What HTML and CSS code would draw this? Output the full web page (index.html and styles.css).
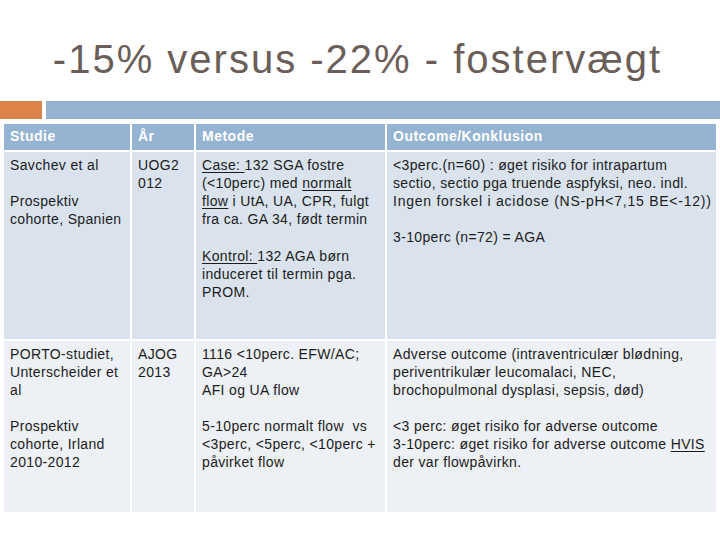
FILE: index.html
```html
<!DOCTYPE html>
<html lang="da">
<head>
<meta charset="utf-8">
<link rel="stylesheet" href="styles.css">
</head>
<body>
<div class="slide">
  <h1 class="title">-15% versus -22% - fostervægt</h1>
  <div class="bars">
    <div class="bar-orange"></div>
    <div class="bar-blue"></div>
  </div>
  <div class="table">
    <div class="cell head">Studie</div>
    <div class="cell head">År</div>
    <div class="cell head">Metode</div>
    <div class="cell head">Outcome/Konklusion</div>

    <div class="cell r1">
      <p>Savchev et al</p>
      <p>Prospektiv<br>cohorte, Spanien</p>
    </div>
    <div class="cell r1">
      <p>UOG2<br>012</p>
    </div>
    <div class="cell r1">
      <p><u>Case: </u>132 SGA fostre<br>(&lt;10perc) med <u>normalt</u><br><u>flow</u> i UtA, UA, CPR, fulgt<br>fra ca. GA 34, født termin</p>
      <p class="gap19"><u>Kontrol: </u>132 AGA børn<br>induceret til termin pga.<br>PROM.</p>
    </div>
    <div class="cell r1">
      <p>&lt;3perc.(n=60) : øget risiko for intrapartum<br>sectio, sectio pga truende aspfyksi, neo. indl.<br><span class="wide">Ingen forskel i acidose (NS-pH&lt;7,15 BE&lt;-12))</span></p>
      <p>3-10perc (n=72) = AGA</p>
    </div>

    <div class="cell r2">
      <p>PORTO-studiet,<br>Unterscheider et<br>al</p>
      <p>Prospektiv<br>cohorte, Irland<br>2010-2012</p>
    </div>
    <div class="cell r2">
      <p>AJOG<br>2013</p>
    </div>
    <div class="cell r2">
      <p>1116 &lt;10perc. EFW/AC;<br>GA&gt;24<br>AFI og UA flow</p>
      <p>5-10perc normalt flow&nbsp; vs<br>&lt;3perc, &lt;5perc, &lt;10perc +<br>påvirket flow</p>
    </div>
    <div class="cell r2">
      <p>Adverse outcome (intraventriculær blødning,<br>periventrikulær leucomalaci, NEC,<br>brochopulmonal dysplasi, sepsis, død)</p>
      <p>&lt;3 perc: øget risiko for adverse outcome<br>3-10perc: øget risiko for adverse outcome <u>HVIS</u><br>der var flowpåvirkn.</p>
    </div>
  </div>
</div>
</body>
</html>
```

FILE: styles.css
```css
html, body {
  margin: 0;
  padding: 0;
  background: #ffffff;
}

.slide {
  width: 720px;
  height: 540px;
  overflow: hidden;
  font-family: "Liberation Sans", Arial, sans-serif;
}

.title {
  margin: 0;
  height: 101px;
  box-sizing: border-box;
  padding-top: 36px;
  padding-right: 5px;
  text-align: center;
  font-weight: normal;
  font-size: 40px;
  line-height: 46px;
  letter-spacing: 2px;
  color: #6b5e58;
}

.bars {
  display: flex;
  gap: 4px;
  height: 18px;
}

.bar-orange {
  width: 42px;
  background: #db844a;
}

.bar-blue {
  flex: 1;
  background: #94b4d1;
}

.table {
  margin: 5px 0 0 4px;
  display: grid;
  grid-template-columns: 126px 62px 189px 329px;
  grid-template-rows: 26px 187px 171px;
  gap: 2px;
}

.cell {
  padding: 4px 4px 0 6px;
  font-size: 14px;
  line-height: 18px;
  letter-spacing: 0.35px;
  color: #1c1c1c;
  white-space: nowrap;
}

.cell p {
  margin: 0 0 18px 0;
}

.cell p.gap19 {
  margin-top: 19px;
}

.cell .wide {
  letter-spacing: 0.75px;
}

.cell u {
  text-underline-offset: 2px;
}

.head {
  background: #94b4d1;
  color: #ffffff;
  font-weight: bold;
  letter-spacing: 0.5px;
  padding-top: 3px;
}

.r1 {
  background: #d9e2ed;
}

.r2 {
  background: #edf0f5;
}
```
